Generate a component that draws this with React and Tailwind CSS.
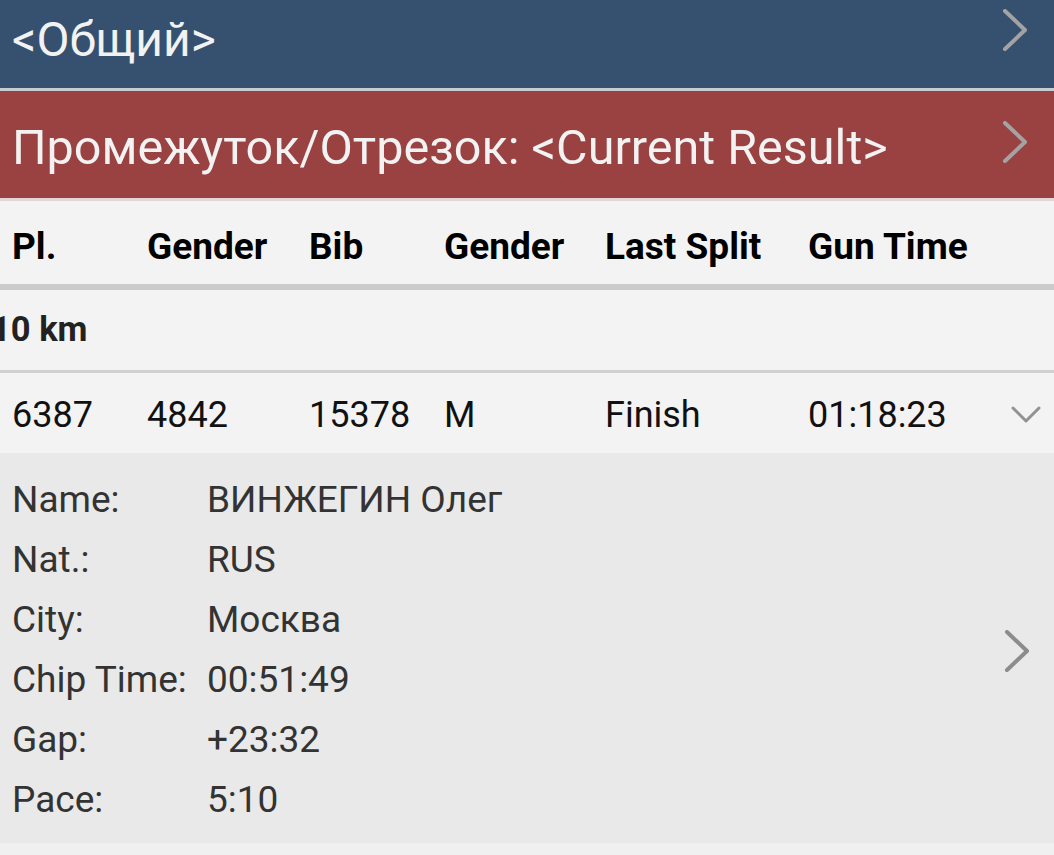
import React from 'react';

const font = { fontFamily: 'Roboto, "Noto Sans", sans-serif' };

function Chevron({ className, dir = 'right', stroke = '#a3a3a3', width = 4 }) {
  if (dir === 'down') {
    return (
      <svg className={className} viewBox="0 0 30 20" fill="none">
        <polyline points="2,3 15,16 28,3" stroke={stroke} strokeWidth={width} strokeLinecap="round" strokeLinejoin="round" />
      </svg>
    );
  }
  return (
    <svg className={className} viewBox="0 0 26 42" fill="none">
      <polyline points="3,2 23,21 3,40" stroke={stroke} strokeWidth={width} strokeLinecap="round" strokeLinejoin="round" />
    </svg>
  );
}

const columns = ['Pl.', 'Gender', 'Bib', 'Gender', 'Last Split', 'Gun Time'];
const row = ['6387', '4842', '15378', 'M', 'Finish', '01:18:23'];
const details = [
  ['Name:', 'ВИНЖЕГИН Олег'],
  ['Nat.:', 'RUS'],
  ['City:', 'Москва'],
  ['Chip Time:', '00:51:49'],
  ['Gap:', '+23:32'],
  ['Pace:', '5:10'],
];

const grid = 'grid grid-cols-[135px_162px_135px_161px_203px_1fr_auto] pl-[12px]';

export default function App() {
  return (
    <div className="w-[1054px] h-[855px] overflow-hidden bg-[#f3f3f4]" style={font}>
      {/* Race selector */}
      <div className="h-[88px] bg-[#365070] flex items-center justify-between pl-[12px] pr-[26px]">
        <span className="text-[48px] text-[#f2f2f2] leading-none -mt-[8px]">&lt;Общий&gt;</span>
        <Chevron className="w-[26px] h-[42px] -mt-[28px]" />
      </div>
      <div className="h-[3px] bg-[#c7ccd2]" />

      {/* Split selector */}
      <div className="h-[107px] bg-[#9a4142] flex items-center justify-between pl-[12px] pr-[26px]">
        <span className="text-[48.5px] text-[#f2f2f2] leading-none mt-[8px] whitespace-nowrap">Промежуток/Отрезок: &lt;Current Result&gt;</span>
        <Chevron className="w-[26px] h-[42px] -mt-[6px]" />
      </div>
      <div className="h-[3px] bg-[#e3d6d6]" />

      {/* Column header */}
      <div className={`${grid} h-[83px] items-center pt-[8px] text-[37px] font-bold text-black`}>
        {columns.map((c, i) => (
          <span key={i} className="whitespace-nowrap">{c}</span>
        ))}
        <span />
      </div>
      <div className="h-[6px] bg-[#cbcbcb]" />

      {/* Group */}
      <div className="h-[80px] flex items-center -ml-[9px] text-[34.5px] font-bold text-[#222]">
        10 km
      </div>
      <div className="h-[3px] bg-[#d0d0d0]" />

      {/* Result row */}
      <div className={`${grid} h-[80px] items-center pt-[4px] text-[36px] text-[#111]`}>
        {row.map((c, i) => (
          <span key={i} className="whitespace-nowrap">{c}</span>
        ))}
        <div className="flex justify-end pr-[13px]">
          <Chevron dir="down" className="w-[30px] h-[20px]" stroke="#929292" width={3} />
        </div>
      </div>

      {/* Details */}
      <div className="h-[390px] bg-[#e9e9e9] flex items-start justify-between pl-[12px] pr-[24px] pt-[17px]">
        <div className="flex flex-col text-[37px] text-[#333]">
          {details.map(([k, v]) => (
            <div key={k} className="flex h-[60px] items-center">
              <span className="w-[195px] whitespace-nowrap">{k}</span>
              <span className="whitespace-nowrap">{v}</span>
            </div>
          ))}
        </div>
        <Chevron className="w-[26px] h-[42px] mt-[160px]" stroke="#8c8c8c" />
      </div>
      <div className="h-[12px] bg-[#f0f0f0]" />
    </div>
  );
}
